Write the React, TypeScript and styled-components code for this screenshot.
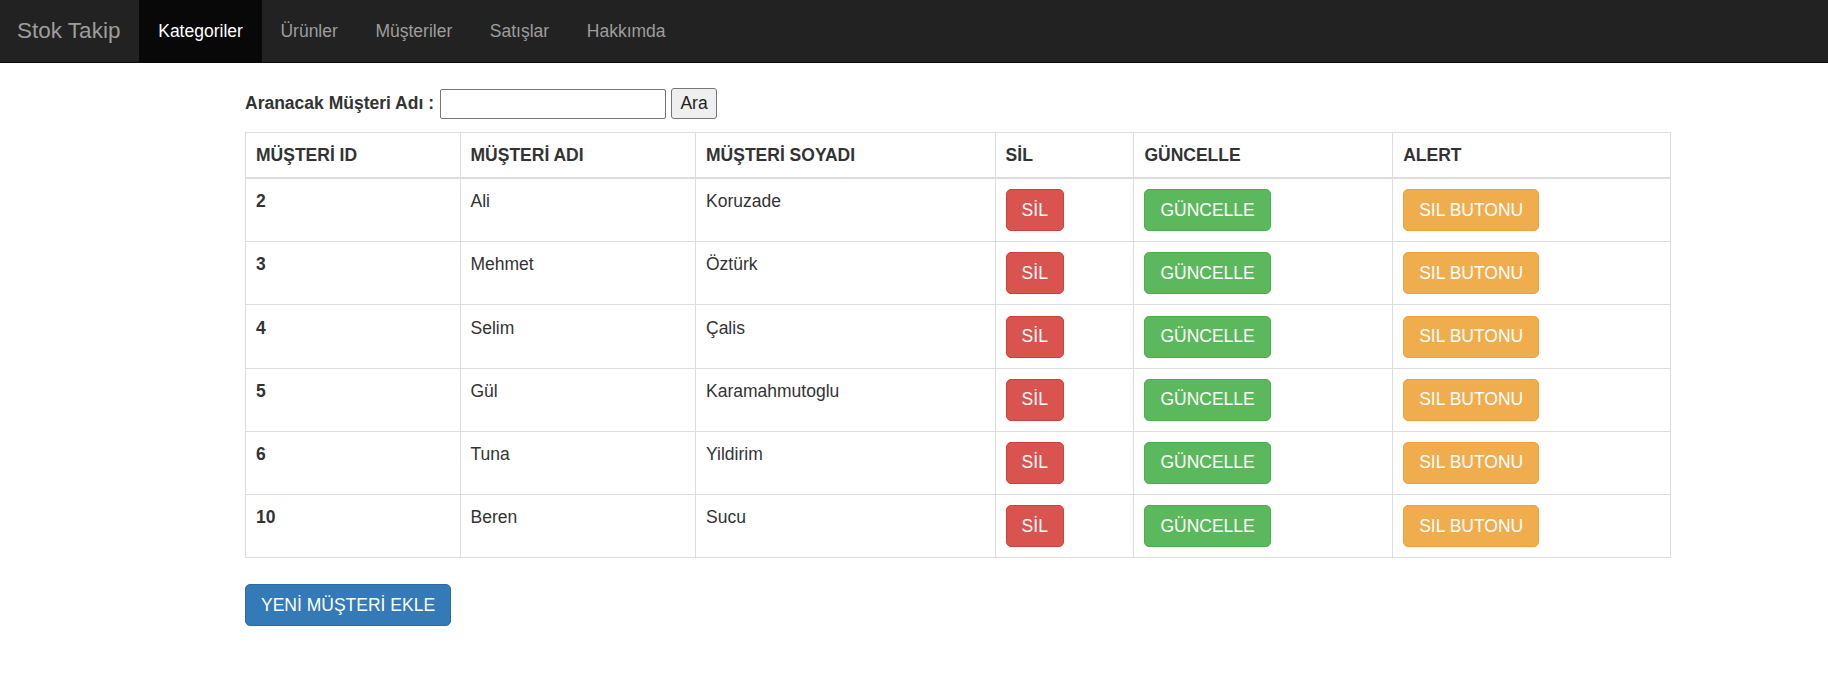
import styled, { createGlobalStyle } from "styled-components"

const GlobalStyle = createGlobalStyle`
    body {
        margin: 0;
        background: #fff;
        font-family: "Liberation Sans", Arial, sans-serif;
        font-size: 17.5px;
        line-height: 25px;
        color: #333;
    }
    * { box-sizing: border-box; }
`

const Navbar = styled.nav`
    display: flex;
    align-items: stretch;
    height: 63px;
    background-color: #222;
    border-bottom: 1px solid #080808;
`

const Brand = styled.a`
    padding: 18px 19px 19px 17px;
    font-size: 22.5px;
    line-height: 25px;
    color: #9d9d9d;
    text-decoration: none;
`

const NavList = styled.ul`
    display: flex;
    margin: 0;
    padding: 0;
    list-style: none;
`

const NavLink = styled.a<{ active?: boolean }>`
    display: block;
    padding: 18.5px 18.8px;
    line-height: 25px;
    color: ${p => p.active ? '#fff' : '#9d9d9d'};
    background-color: ${p => p.active ? '#080808' : 'transparent'};
    text-decoration: none;
`

const Container = styled.main`
    width: 1425px;
    margin-left: 245px;
    padding-top: 25px;
`

const SearchForm = styled.form`
    display: flex;
    align-items: center;
    height: 31px;
    margin-bottom: 13px;
`

const Label = styled.label`
    font-weight: bold;
    margin-right: 6px;
`

const SearchInput = styled.input`
    width: 226px;
    height: 30px;
    border: 1px solid #767676;
    border-radius: 2px;
    font: inherit;
    padding: 0 3px;
`

const PlainButton = styled.button`
    margin-left: 5px;
    width: 46px;
    height: 31px;
    padding: 0;
    background: #efefef;
    border: 1px solid #767676;
    border-radius: 3px;
    font-family: "Liberation Sans", Arial, sans-serif;
    font-size: 17.5px;
    color: #222;
`

const Table = styled.table`
    width: 1425px;
    border-collapse: collapse;
    table-layout: fixed;
    margin-bottom: 26px;
`

const Th = styled.th`
    text-align: left;
    padding: 10px 10px 9px;
    border: 1px solid #ddd;
    border-bottom: 2px solid #ddd;
    font-weight: bold;
    line-height: 25px;
`

const Td = styled.td<{ bold?: boolean }>`
    vertical-align: top;
    padding: 10.2px 10px 10px;
    border: 1px solid #ddd;
    line-height: 25px;
    font-weight: ${p => p.bold ? 'bold' : 'normal'};
`

const variants = {
    danger: ['#d9534f', '#d43f3a'],
    success: ['#5cb85c', '#4cae4c'],
    warning: ['#f0ad4e', '#eea236'],
    primary: ['#337ab7', '#2e6da4'],
}

const Btn = styled.button<{ variant: keyof typeof variants }>`
    display: inline-block;
    height: 42px;
    padding: 7px 15px;
    font-family: "Liberation Sans", Arial, sans-serif;
    font-size: 17.5px;
    line-height: 25px;
    color: #fff;
    background-color: ${p => variants[p.variant][0]};
    border: 1px solid ${p => variants[p.variant][1]};
    border-radius: 5px;
    white-space: nowrap;
`

const columns = [
    { title: 'MÜŞTERİ ID', width: 214.5 },
    { title: 'MÜŞTERİ ADI', width: 235.5 },
    { title: 'MÜŞTERİ SOYADI', width: 299.6 },
    { title: 'SİL', width: 138.8 },
    { title: 'GÜNCELLE', width: 258.8 },
    { title: 'ALERT', width: 277.8 },
]

const customers = [
    { id: 2, name: 'Ali', surname: 'Koruzade' },
    { id: 3, name: 'Mehmet', surname: 'Öztürk' },
    { id: 4, name: 'Selim', surname: 'Çalis' },
    { id: 5, name: 'Gül', surname: 'Karamahmutoglu' },
    { id: 6, name: 'Tuna', surname: 'Yildirim' },
    { id: 10, name: 'Beren', surname: 'Sucu' },
]

const menu = ['Kategoriler', 'Ürünler', 'Müşteriler', 'Satışlar', 'Hakkımda']

const App = () => {
    return (
        <>
            <GlobalStyle />
            <Navbar>
                <Brand href="#">Stok Takip</Brand>
                <NavList>
                    {menu.map((item, i) => (
                        <li key={item}><NavLink href="#" active={i === 0}>{item}</NavLink></li>
                    ))}
                </NavList>
            </Navbar>
            <Container>
                <SearchForm onSubmit={e => e.preventDefault()}>
                    <Label>Aranacak Müşteri Adı :</Label>
                    <SearchInput type="text" />
                    <PlainButton type="submit">Ara</PlainButton>
                </SearchForm>
                <Table>
                    <colgroup>
                        {columns.map(c => <col key={c.title} style={{ width: c.width }} />)}
                    </colgroup>
                    <thead>
                        <tr>
                            {columns.map(c => <Th key={c.title}>{c.title}</Th>)}
                        </tr>
                    </thead>
                    <tbody>
                        {customers.map(c => (
                            <tr key={c.id}>
                                <Td bold>{c.id}</Td>
                                <Td>{c.name}</Td>
                                <Td>{c.surname}</Td>
                                <Td><Btn variant="danger">SİL</Btn></Td>
                                <Td><Btn variant="success">GÜNCELLE</Btn></Td>
                                <Td><Btn variant="warning">SIL BUTONU</Btn></Td>
                            </tr>
                        ))}
                    </tbody>
                </Table>
                <Btn variant="primary">YENİ MÜŞTERİ EKLE</Btn>
            </Container>
        </>
    )
}

export default App
